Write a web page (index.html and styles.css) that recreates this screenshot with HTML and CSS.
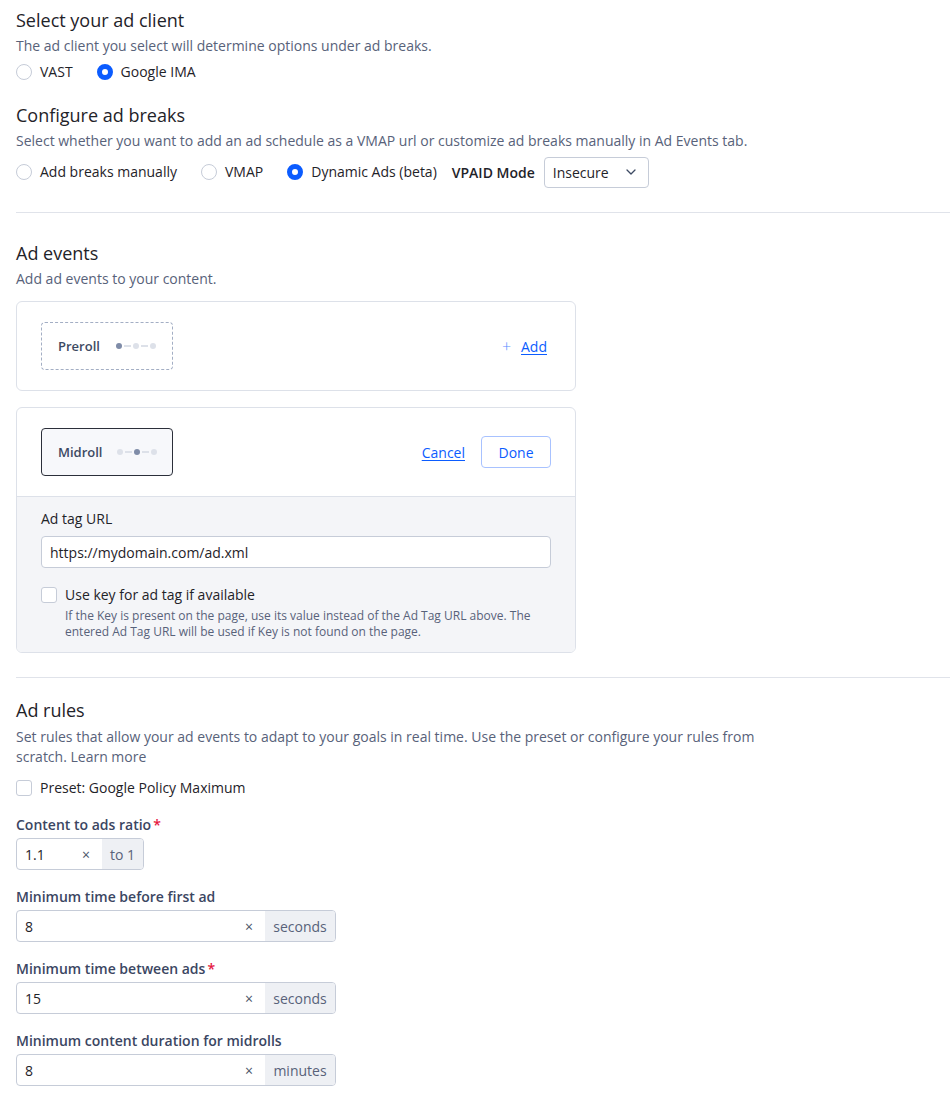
FILE: index.html
```html
<!DOCTYPE html>
<html lang="en">
<head>
<meta charset="utf-8">
<title>Ad settings</title>
<link rel="stylesheet" href="styles.css">
</head>
<body>
<div class="page">
  <section class="section">
    <h2 class="title">Select your ad client</h2>
    <p class="desc">The ad client you select will determine options under ad breaks.</p>
    <div class="radio-row first">
      <label class="radio"><span class="circle"></span>VAST</label>
      <label class="radio"><span class="circle checked"></span>Google IMA</label>
    </div>

    <h2 class="title t2">Configure ad breaks</h2>
    <p class="desc">Select whether you want to add an ad schedule as a VMAP url or customize ad breaks manually in Ad Events tab.</p>
    <div class="radio-row second">
      <label class="radio"><span class="circle"></span>Add breaks manually</label>
      <label class="radio"><span class="circle"></span>VMAP</label>
      <label class="radio"><span class="circle checked"></span>Dynamic Ads (beta)</label>
      <span class="vpaid-label">VPAID Mode</span>
      <div class="select">
        <span>Insecure</span>
        <svg width="10" height="6" viewBox="0 0 10 6"><path d="M1 1l4 4 4-4" fill="none" stroke="#3d4a63" stroke-width="1.3" stroke-linecap="round" stroke-linejoin="round"/></svg>
      </div>
    </div>
  </section>

  <hr class="divider d1">

  <section class="section">
    <h2 class="title">Ad events</h2>
    <p class="desc">Add ad events to your content.</p>

    <div class="card c1">
      <div class="card-head">
        <div class="roll dashed">
          <span class="roll-name">Preroll</span>
          <span class="dots"><i class="on"></i><b></b><i></i><b></b><i></i></span>
        </div>
        <a class="add-link" href="#"><span class="plus">+</span><span class="u">Add</span></a>
      </div>
    </div>

    <div class="card c2">
      <div class="card-head">
        <div class="roll active">
          <span class="roll-name">Midroll</span>
          <span class="dots"><i></i><b></b><i class="on"></i><b></b><i></i></span>
        </div>
        <div class="actions">
          <a class="cancel" href="#">Cancel</a>
          <button class="done">Done</button>
        </div>
      </div>
      <div class="card-body">
        <div class="field-label">Ad tag URL</div>
        <div class="text-input">https://mydomain.com/ad.xml</div>
        <div class="check-row">
          <span class="box"></span>
          <div>
            <div class="check-label">Use key for ad tag if available</div>
            <div class="help">If the Key is present on the page, use its value instead of the Ad Tag URL above. The entered Ad Tag URL will be used if Key is not found on the page.</div>
          </div>
        </div>
      </div>
    </div>
  </section>

  <hr class="divider d2">

  <section class="section">
    <h2 class="title">Ad rules</h2>
    <p class="desc wide">Set rules that allow your ad events to adapt to your goals in real time. Use the preset or configure your rules from scratch. Learn more</p>
    <label class="preset"><span class="box"></span>Preset: Google Policy Maximum</label>

    <div class="rule">
      <div class="rule-label">Content to ads ratio<span class="req">*</span></div>
      <div class="group small">
        <span class="val">1.1</span>
        <span class="clear">×</span>
        <span class="addon">to 1</span>
      </div>
    </div>

    <div class="rule">
      <div class="rule-label">Minimum time before first ad</div>
      <div class="group">
        <span class="val">8</span>
        <span class="clear">×</span>
        <span class="addon">seconds</span>
      </div>
    </div>

    <div class="rule">
      <div class="rule-label">Minimum time between ads<span class="req">*</span></div>
      <div class="group">
        <span class="val">15</span>
        <span class="clear">×</span>
        <span class="addon">seconds</span>
      </div>
    </div>

    <div class="rule">
      <div class="rule-label">Minimum content duration for midrolls</div>
      <div class="group">
        <span class="val">8</span>
        <span class="clear">×</span>
        <span class="addon">minutes</span>
      </div>
    </div>
  </section>
</div>
</body>
</html>
```

FILE: styles.css
```css
* { box-sizing: border-box; }
html, body { margin: 0; padding: 0; background: #fff; }
body {
  font-family: "Open Sans", "Noto Sans", sans-serif;
  color: #1f2329;
  font-size: 14px;
}
.page { padding: 8px 0 0 16px; }
.section { display: flex; flex-direction: column; align-items: flex-start; }
.title {
  margin: 0;
  font-size: 18px;
  line-height: 24px;
  font-weight: 400;
  color: #1f2329;
}
.title.t2 { margin-top: 21px; }
.desc {
  margin: 4px 0 0;
  font-size: 14px;
  line-height: 20px;
  color: #58627a;
}
.desc.wide { max-width: 750px; margin-top: 5px; }

.radio-row { display: flex; align-items: center; gap: 24px; }
.radio-row.first { margin-top: 6px; height: 20px; }
.radio-row.second { margin-top: 6px; height: 30px; gap: 24px; }
.radio { display: flex; align-items: center; gap: 8px; line-height: 20px; color: #1f2329; }
.circle {
  width: 16px; height: 16px; border-radius: 50%;
  border: 1px solid #c6ccd8; background: #fff;
  display: inline-block;
}
.circle.checked {
  border: 5px solid #0b5cff;
  background: #fff;
}
.vpaid-label { font-weight: 600; margin-left: -9px; color: #1f2329; }
.select {
  margin-left: -15px;
  width: 105px; height: 31px;
  border: 1px solid #c6ccd8; border-radius: 4px;
  display: flex; align-items: center; justify-content: space-between;
  padding: 0 12px 0 8px;
}

.divider { border: 0; border-top: 1px solid #e0e3ea; margin: 0; }
.d1 { margin-top: 25px; margin-bottom: 28px; }
.d2 { margin-top: 24px; margin-bottom: 20px; }

.card {
  width: 560px;
  border: 1px solid #dde1e9;
  border-radius: 6px;
  background: #fff;
  overflow: hidden;
}
.c1 { margin-top: 12px; }
.c2 { margin-top: 16px; }
.card-head {
  display: flex; align-items: center; justify-content: space-between;
  padding: 20px 24px;
}
.roll {
  width: 132px; height: 48px;
  border-radius: 4px;
  display: flex; align-items: center; gap: 16px;
  padding-left: 16px;
}
.roll.dashed { border: 1px dashed #a3aec4; }
.roll.active { border: 1px solid #2b2f3a; background: #f7f8fb; gap: 14px; }
.roll-name { font-size: 13px; font-weight: 600; color: #3d4a63; }
.dots { display: flex; align-items: center; gap: 2px; }
.dots i { width: 6px; height: 6px; border-radius: 50%; background: #dde1e9; display: block; }
.dots i.on { background: #7f8ca8; }
.dots b { width: 7px; height: 2px; background: #dde1e9; display: block; }

.add-link { color: #0b5cff; text-decoration: none; display: flex; align-items: center; gap: 10px; font-weight: 500; margin-right: 4px; }
.add-link .plus { font-size: 16px; color: #5b8cff; font-weight: 300; }
.add-link .u { text-decoration: underline; text-underline-offset: 2px; }

.actions { display: flex; align-items: center; gap: 16px; }
.cancel { color: #0b5cff; text-decoration: underline; text-underline-offset: 2px; font-weight: 500; }
.done {
  width: 70px; height: 32px;
  border: 1px solid #a8c2ff; border-radius: 4px; background: #fff;
  color: #0b5cff; font: 500 14px "Open Sans", sans-serif;
}

.card-body {
  background: #f4f5f8;
  border-top: 1px solid #dde1e9;
  padding: 12px 24px 12px;
}
.field-label { line-height: 20px; color: #1f2329; }
.text-input {
  margin-top: 7px;
  height: 32px;
  border: 1px solid #c6ccd8; border-radius: 4px; background: #fff;
  padding: 0 8px;
  display: flex; align-items: center;
}
.check-row { margin-top: 17px; display: flex; gap: 8px; align-items: flex-start; }
.box {
  width: 16px; height: 16px; border: 1px solid #c6ccd8; border-radius: 3px; background: #fff;
  flex: none; margin-top: 2px;
}
.check-label { line-height: 20px; }
.help { margin-top: 3px; font-size: 12px; line-height: 16px; color: #58627a; }

.preset { margin-top: 11px; display: flex; align-items: center; gap: 8px; line-height: 20px; }
.preset .box { margin-top: 0; }

.rule { margin-top: 17px; display: flex; flex-direction: column; }
.rule-label { font-weight: 600; color: #3b4662; line-height: 20px; }
.req { color: #e5173f; margin-left: 2px; }
.group {
  margin-top: 3px;
  width: 320px; height: 32px;
  border: 1px solid #c6ccd8; border-radius: 4px;
  display: flex; align-items: stretch; overflow: hidden;
}
.group .val { flex: 1; display: flex; align-items: center; padding-left: 8px; }
.group .clear { display: flex; align-items: center; padding-right: 12px; color: #4a5468; font-size: 14px; }
.group .addon {
  width: 70px; background: #eef0f4; color: #58627a;
  display: flex; align-items: center; justify-content: center;
}
.group.small { width: 128px; }
.group.small .addon { width: 41px; }
```
